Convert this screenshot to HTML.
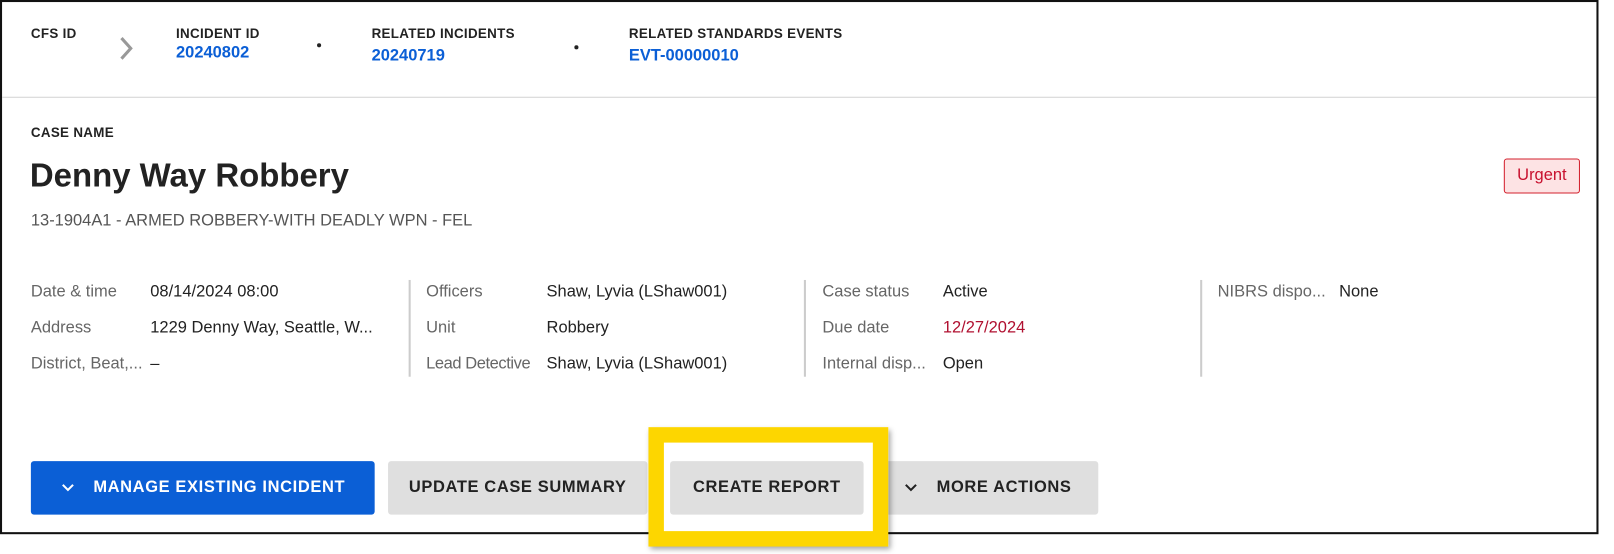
<!DOCTYPE html>
<html><head><meta charset="utf-8"><style>
*{margin:0;padding:0;box-sizing:border-box}
body{width:1614px;height:554px;background:#fff;font-family:"Liberation Sans",sans-serif;position:relative;overflow:hidden;color:#222}
#w{position:absolute;left:0;top:0;width:1568px;height:538px;transform:scale(1.0293);transform-origin:0 0}
.a{position:absolute;white-space:nowrap}
.frame{position:absolute;left:0;top:0;width:1553px;height:519px;border:2px solid #111}
.hl{font-size:13px;font-weight:bold;letter-spacing:.3px;color:#222}
.lnk{font-size:16px;font-weight:bold;color:#0b5fd6}
.lab{font-size:16px;color:#666;top:0}
.val{font-size:16px;color:#222}
.div{position:absolute;width:2px;background:#ccc;top:272px;height:94px}
.btn{position:absolute;top:448px;height:52px;border-radius:3px;background:#dfdfdf;font-size:16px;font-weight:bold;letter-spacing:.6px;color:#222;display:flex;align-items:center;justify-content:center}
</style></head><body><div id="w">
<div class="frame"></div>
<div class="a hl" style="left:30px;top:25px">CFS ID</div>
<svg class="a" style="left:115px;top:34px" width="16" height="26"><path d="M3 3 L12 13 L3 23" stroke="#999" stroke-width="3" fill="none"/></svg>
<div class="a hl" style="left:171px;top:25px">INCIDENT ID</div>
<div class="a lnk" style="left:171px;top:43px">20240802</div>
<div class="a" style="left:308px;top:42px;width:4px;height:4px;border-radius:2px;background:#222"></div>
<div class="a hl" style="left:361px;top:25px">RELATED INCIDENTS</div>
<div class="a lnk" style="left:361px;top:46px">20240719</div>
<div class="a" style="left:558px;top:44px;width:4px;height:4px;border-radius:2px;background:#222"></div>
<div class="a hl" style="left:611px;top:25px">RELATED STANDARDS EVENTS</div>
<div class="a lnk" style="left:611px;top:46px">EVT-00000010</div>
<div class="a" style="left:2px;top:94px;width:1549px;height:1px;background:#d4d4d4"></div>
<div class="a hl" style="left:30px;top:121px;font-weight:600">CASE NAME</div>
<div class="a" style="left:29px;top:152px;font-size:32px;font-weight:bold;color:#222">Denny Way Robbery</div>
<div class="a" style="left:30px;top:206px;font-size:16px;color:#555">13-1904A1 - ARMED ROBBERY-WITH DEADLY WPN - FEL</div>
<div class="a" style="left:1461px;top:154px;width:74px;height:34px;border:1px solid #d3212e;border-radius:3px;background:#fde3e4;color:#c8102e;font-size:16px;display:flex;align-items:center;justify-content:center">Urgent</div>

<div class="a lab" style="left:30px;top:275px">Date &amp; time</div><div class="a val" style="left:146px;top:275px">08/14/2024 08:00</div>
<div class="a lab" style="left:30px;top:310px">Address</div><div class="a val" style="left:146px;top:310px">1229 Denny Way, Seattle, W...</div>
<div class="a lab" style="left:30px;top:345px">District, Beat,...</div><div class="a val" style="left:146px;top:345px">–</div>
<div class="div" style="left:397px"></div>
<div class="a lab" style="left:414px;top:275px">Officers</div><div class="a val" style="left:531px;top:275px">Shaw, Lyvia (LShaw001)</div>
<div class="a lab" style="left:414px;top:310px">Unit</div><div class="a val" style="left:531px;top:310px">Robbery</div>
<div class="a lab" style="left:414px;top:345px;letter-spacing:-.4px">Lead Detective</div><div class="a val" style="left:531px;top:345px">Shaw, Lyvia (LShaw001)</div>
<div class="div" style="left:781px"></div>
<div class="a lab" style="left:799px;top:275px">Case status</div><div class="a val" style="left:916px;top:275px">Active</div>
<div class="a lab" style="left:799px;top:310px">Due date</div><div class="a val" style="left:916px;top:310px;color:#b01030">12/27/2024</div>
<div class="a lab" style="left:799px;top:345px">Internal disp...</div><div class="a val" style="left:916px;top:345px">Open</div>
<div class="div" style="left:1166px"></div>
<div class="a lab" style="left:1183px;top:275px">NIBRS dispo...</div><div class="a val" style="left:1301px;top:275px">None</div>

<div class="btn" style="left:30px;width:334px;background:#0b5fd6;color:#fff"><svg width="14" height="10" style="margin-right:18px"><path d="M2 2 L7 7 L12 2" stroke="#fff" stroke-width="2" fill="none"/></svg>MANAGE EXISTING INCIDENT</div>
<div class="btn" style="left:377px;width:252px">UPDATE CASE SUMMARY</div>
<div class="btn" style="left:651px;width:188px">CREATE REPORT</div>
<div class="btn" style="left:852px;width:215px"><svg width="14" height="10" style="margin-right:18px"><path d="M2 2 L7 7 L12 2" stroke="#222" stroke-width="2" fill="none"/></svg>MORE ACTIONS</div>
<div class="a" style="left:630px;top:415px;width:233px;height:116px;border:15px solid #fdd600;box-shadow:2px 3px 5px rgba(0,0,0,.35)"></div>
</div></body></html>
